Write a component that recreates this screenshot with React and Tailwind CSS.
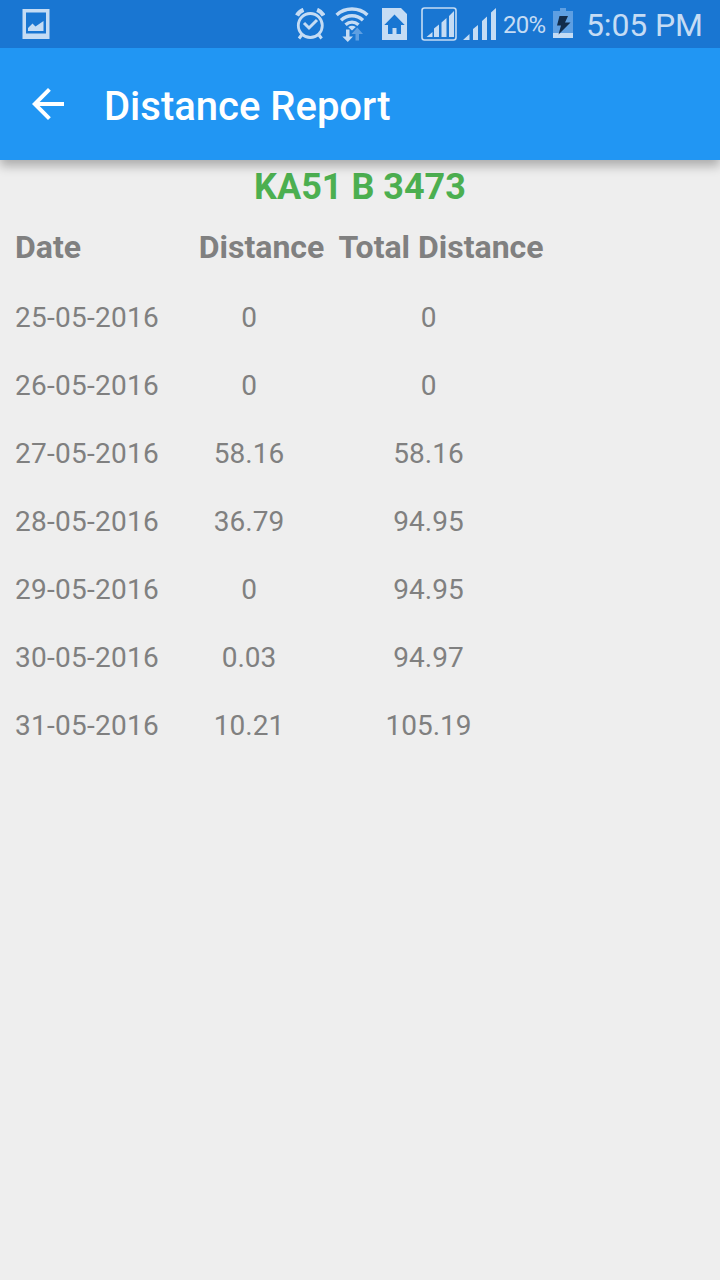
const rows = [
  { date: "25-05-2016", distance: "0", total: "0" },
  { date: "26-05-2016", distance: "0", total: "0" },
  { date: "27-05-2016", distance: "58.16", total: "58.16" },
  { date: "28-05-2016", distance: "36.79", total: "94.95" },
  { date: "29-05-2016", distance: "0", total: "94.95" },
  { date: "30-05-2016", distance: "0.03", total: "94.97" },
  { date: "31-05-2016", distance: "10.21", total: "105.19" },
]

function ImageIcon() {
  return (
    <svg className="w-7 h-[30px]" viewBox="0 0 28 30" fill="currentColor">
      <path fillRule="evenodd" d="M.5 0h27v30H.5zM4 3.500v21h20v-21z" />
      <path d="M6 22v-3l4.500-4.500 3 3L21.500 12v10z" />
    </svg>
  )
}

function AlarmIcon() {
  return (
    <svg className="w-[30px] h-8" viewBox="0 0 30 32" fill="none" stroke="currentColor">
      <circle cx="15.300" cy="17.500" r="12" strokeWidth="2.800" />
      <path d="M9 15l5 5 8-8" strokeWidth="3" />
      <path d="M2 7.500C3.500 4.500 5.500 3 8.500 1.800M28.600 7.500C27.100 4.500 25.100 3 22.100 1.800" strokeWidth="4.200" />
      <path d="M7 26.500L4 30.500M23.600 26.500l3 4" strokeWidth="3" />
    </svg>
  )
}

function WifiIcon() {
  return (
    <svg className="w-[34px] h-9" viewBox="0 0 34 36" fill="none" stroke="currentColor">
      <path d="M1.600 8C10 0 24 0 32.400 8M6 13.200C12.500 7.200 21.500 7.200 28 13.200M10.500 17.700C14.500 14.200 19.500 14.200 23.500 17.700" strokeWidth="3.400" />
      <path d="M13.200 20C15.500 18.200 18.500 18.200 20.800 20L17 23.500z" fill="currentColor" stroke="none" />
      <path d="M11 22.500h3.500V29.500H18l-5.200 5.500L7.300 29.500H11z" fill="currentColor" stroke="none" />
      <path d="M20.500 33.500V27h-4l5.800-6.500 5.700 6.500h-4v6.500z" fill="#5e9fe2" stroke="none" />
    </svg>
  )
}

function SimHomeIcon() {
  return (
    <svg className="w-[25px] h-8" viewBox="0 0 25 32" fill="currentColor">
      <path fillRule="evenodd" d="M0 0h19l6 6v26H0zM12.500 6.500L2.300 17H6v9h4.500v-6h4v6H19v-9h3.700z" />
    </svg>
  )
}

function BoxedSignalIcon() {
  return (
    <svg className="w-9 h-[34px]" viewBox="0 0 36 34" fill="currentColor">
      <rect x="1" y="1" width="34" height="32" rx="2.500" fill="none" stroke="currentColor" strokeWidth="1.600" />
      <path d="M5.500 30l6-5v5zM13 30v-8.500l5-4V30zM20.500 30V15.500l5-4.500v19zM28 30V9l5-5v26z" />
    </svg>
  )
}

function SignalIcon() {
  return (
    <svg className="w-[34px] h-8" viewBox="0 0 34 32" fill="currentColor">
      <path d="M0 32l6.500-6v6zM10 32V21l5-4v15zM19 32V13l5-4.500V32zM28 32V4.500L33 0v32z" />
    </svg>
  )
}

function BatteryIcon() {
  return (
    <svg className="w-5 h-[30px]" viewBox="0 0 20 30">
      <path d="M0 3h7V0h6v3h7v22H0z" fill="#5e9fe2" />
      <path d="M0 25h20v5H0z" fill="currentColor" />
      <path d="M6.500 8h8.500l-3 6.500h5.500L5.500 26.500 8 17.500H4z" fill="#122c4b" />
    </svg>
  )
}

function StatusBar() {
  return (
    <div className="relative z-10 h-12 flex items-center bg-[#1976d2] text-[#c5dcf4]">
      <div className="ml-[22px]"><ImageIcon /></div>
      <div className="ml-[245px]"><AlarmIcon /></div>
      <div className="ml-[10px] pt-0.5"><WifiIcon /></div>
      <div className="ml-[13px]"><SimHomeIcon /></div>
      <div className="ml-3.5"><BoxedSignalIcon /></div>
      <div className="ml-1.5"><SignalIcon /></div>
      <span className="ml-1.5 w-[43px] pt-0.5 text-[24px] leading-none tracking-[-0.7px] whitespace-nowrap">20%</span>
      <div className="ml-[7px] -mt-0.5"><BatteryIcon /></div>
      <span className="ml-[13px] pt-0.5 text-[32px] leading-none tracking-[-0.15px] whitespace-nowrap">5:05 PM</span>
    </div>
  )
}

function AppBar() {
  return (
    <header className="relative h-28 flex items-center bg-[#2196f3] text-white shadow-[0_6px_10px_0_rgba(0,0,0,0.28)]">
      <svg className="ml-8 w-8 h-8" viewBox="0 0 32 32" fill="currentColor">
        <path d="M32 14H7.660L18.840 2.820 16 0 0 16l16 16 2.820-2.820L7.660 18H32z" />
      </svg>
      <h1 className="ml-10 pt-1.5 text-[40px] leading-none font-medium">Distance Report</h1>
    </header>
  )
}

export default function App() {
  return (
    <div className="min-h-screen bg-[#eeeeee] font-['Roboto',sans-serif] overflow-hidden">
      <StatusBar />
      <AppBar />
      <main className="text-[#808080]">
        <h2 className="h-[54px] leading-[54px] text-center text-[36px] font-bold text-[#4caf50]">KA51 B 3473</h2>
        <table className="ml-[7px] table-fixed w-[544px] text-[28px]">
          <colgroup>
            <col className="w-[184px]" />
            <col className="w-[140px]" />
            <col className="w-[220px]" />
          </colgroup>
          <thead>
            <tr className="h-[70px] text-[32px] whitespace-nowrap">
              <th className="pl-2 pb-1 text-left">Date</th>
              <th className="pl-px pb-1">Distance</th>
              <th className="pb-1">Total Distance</th>
            </tr>
          </thead>
          <tbody>
            {rows.map((row) => (
              <tr key={row.date} className="h-[68px]">
                <td className="pl-2 tracking-[0.25px]">{row.date}</td>
                <td className="pr-6 text-center">{row.distance}</td>
                <td className="pr-[25px] text-center">{row.total}</td>
              </tr>
            ))}
          </tbody>
        </table>
      </main>
    </div>
  )
}
